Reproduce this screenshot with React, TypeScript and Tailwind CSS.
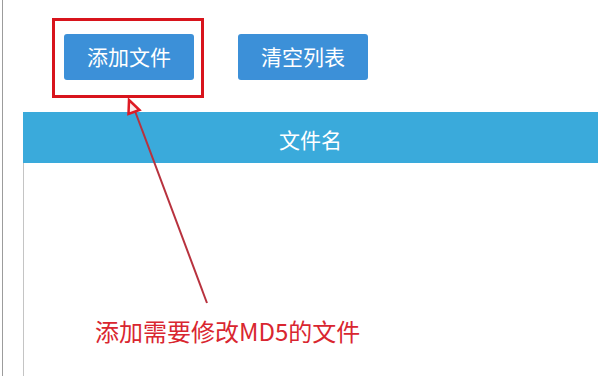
import React from "react";

export default function App() {
  const font = { fontFamily: '"Noto Sans CJK SC", "Noto Sans", sans-serif' };
  return (
    <div className="relative w-[600px] h-[376px] overflow-hidden bg-white" style={font}>
      <div className="flex h-full pl-[2px]">
        <div className="flex flex-1 flex-col border-l-[1.5px] border-[#9c9c9c]">
          <div className="mt-[34px] flex gap-[44px] pl-[61px]">
            <button className="flex h-[46px] w-[130px] items-center justify-center rounded-[3px] bg-[#3c90d8] text-[21px] text-white">
              添加文件
            </button>
            <button className="flex h-[46px] w-[130px] items-center justify-center rounded-[3px] bg-[#3c90d8] text-[21px] text-white">
              清空列表
            </button>
          </div>
          <div className="ml-[20px] mt-[32px] flex w-[575px] flex-1 flex-col">
            <div className="flex h-[51px] items-center justify-center bg-[#3aaadb] pt-[4px] text-[21px] text-white">
              文件名
            </div>
            <div className="flex-1 border-l border-[#c4c4c4]" />
          </div>
        </div>
      </div>

      <div className="absolute left-[52px] top-[18px] h-[80px] w-[152px] border-[3px] border-[#d8141c]" />

      <svg className="absolute left-0 top-0" width="600" height="376" viewBox="0 0 600 376">
        <line x1="207" y1="303" x2="135" y2="111" stroke="#b8323e" strokeWidth="2" />
        <polygon points="129,100 139.5,110 128.5,114" fill="#fbe9ea" stroke="#de1a24" strokeWidth="2.5" strokeLinejoin="miter" />
      </svg>

      <div className="absolute left-[95px] top-[316px] text-[24px] leading-[30px] text-[#d92630] whitespace-nowrap">
        添加需要修改MD5的文件
      </div>
    </div>
  );
}
